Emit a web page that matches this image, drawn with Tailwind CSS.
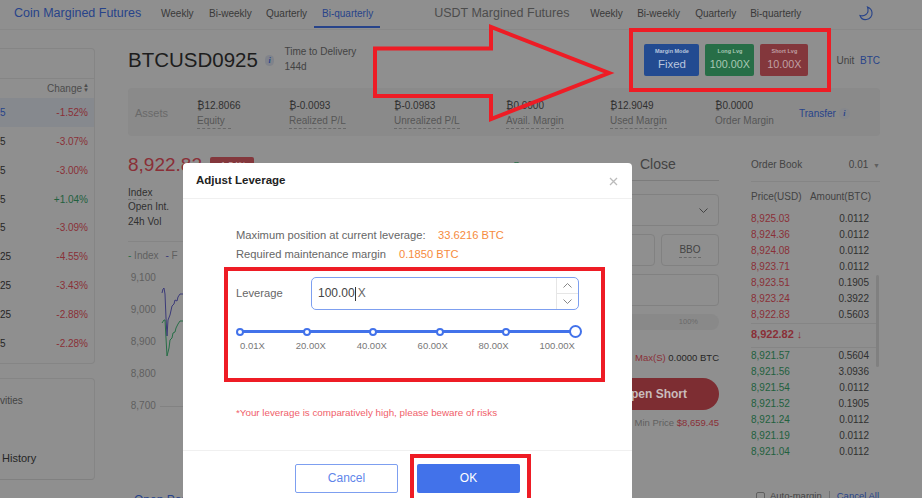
<!DOCTYPE html>
<html lang="en">
<head>
    <meta charset="UTF-8">
    <title>Adjust Leverage</title>
    <script src="https://cdn.jsdelivr.net/npm/@tailwindcss/browser@4"></script>
</head>
<body class="relative w-[922px] h-[498px] overflow-hidden bg-[#8f8f8f] font-['Liberation_Sans',sans-serif] text-[#262626]">

    <!-- page behind the dialog, colours already dimmed -->
    <header class="h-[30px] flex items-center pb-[3px] border-b border-[#888888] text-[10px] text-[#393939]">
        <span class="ml-[14px] w-[147px] text-[12.5px] text-[#27438a]">Coin Margined Futures</span>
        <span class="w-[48px]">Weekly</span>
        <span class="w-[57px]">Bi-weekly</span>
        <span class="w-[56px]">Quarterly</span>
        <span class="relative text-[#27438a]">Bi-quarterly<i class="absolute left-[-8px] right-[-7px] top-[20px] h-[2px] bg-[#27438a]"></i></span>
        <span class="ml-[61px] w-[156px] text-[12.5px] text-[#4c4c4c]">USDT Margined Futures</span>
        <span class="w-[47px]">Weekly</span>
        <span class="w-[58px]">Bi-weekly</span>
        <span class="w-[55px]">Quarterly</span>
        <span>Bi-quarterly</span>
        <svg class="ml-[58px]" width="14" height="15" viewBox="0 0 14 15" fill="none" stroke="#27438a" stroke-width="1.1"><path d="M8.500 1C9.500 4 9 7 7 8.500 5 10 2.500 10 1 9.500 2 12.500 4.500 14 7.500 13.500 11 13 13.500 10 13 6.500 12.800 4 11 2 8.500 1z"/></svg>
    </header>

    <div class="flex">
        <!-- market list -->
        <aside class="w-[95px] mt-[18px] shrink-0 text-[10px]">
            <div class="h-[316px] border border-l-0 border-[#858585] rounded-r">
                <div class="h-[29px]"></div>
                <div class="h-[19px] border-t border-[#858585] flex items-center justify-end pr-[6px] text-[#4c4c4c]">Change<span class="ml-[1px] text-[6px] leading-[5px] w-[5px]">▲<br>▼</span></div>
                <div class="h-[29px] bg-[#86898e] flex items-center justify-between px-[6px] mt-[1px]"><span class="ml-[-6px] text-[#27438a]">5</span><span class="text-[#8a2f37]">-1.52%</span></div>
                <div class="h-[29px] flex items-center justify-between pr-[6px]"><span>5</span><span class="text-[#8a2f37]">-3.07%</span></div>
                <div class="h-[29px] flex items-center justify-between pr-[6px]"><span>5</span><span class="text-[#8a2f37]">-3.00%</span></div>
                <div class="h-[28px] flex items-center justify-between pr-[6px]"><span>5</span><span class="text-[#22613e]">+1.04%</span></div>
                <div class="h-[29px] flex items-center justify-between pr-[6px]"><span>5</span><span class="text-[#8a2f37]">-3.09%</span></div>
                <div class="h-[29px] flex items-center justify-between pr-[6px]"><span>25</span><span class="text-[#8a2f37]">-4.55%</span></div>
                <div class="h-[29px] flex items-center justify-between pr-[6px]"><span>25</span><span class="text-[#8a2f37]">-3.43%</span></div>
                <div class="h-[29px] flex items-center justify-between pr-[6px]"><span>25</span><span class="text-[#8a2f37]">-2.88%</span></div>
                <div class="h-[28px] flex items-center justify-between pr-[6px]"><span>5</span><span class="text-[#8a2f37]">-2.28%</span></div>
            </div>
            <div class="mt-[14px] h-[102px] border border-l-0 border-[#858585] rounded-r border-b-[#808080]">
                <div class="mt-[15px] text-[10px] text-[#434343] leading-[13px]">vities</div>
                <div class="mt-[43px] text-[11px] ml-[2px]">History</div>
            </div>
        </aside>

        <main class="ml-[33px] w-[752px]">
            <!-- title row -->
            <div class="h-[58px] flex items-start pt-[16px]">
                <h1 class="text-[20.5px] leading-[28px] text-[#1d1d1d]">BTCUSD0925</h1>
                <span class="ml-[7px] mt-[9px] w-[11px] h-[11px] rounded-full bg-[#80838b] text-[8px] leading-[11px] text-center italic font-bold text-[#27438a] font-['Liberation_Serif',serif]">i</span>
                <div class="ml-[10px] w-[70px] mt-[-2px] text-[10px] leading-[15px] text-[#434343] whitespace-nowrap">Time to Delivery<br>144d</div>
                <div class="ml-[290px] mt-[-2px] flex gap-[6px] text-center">
                    <div class="w-[55px] h-[32px] rounded-[2px] bg-[#234b91] text-[#b9c6dd]"><div class="text-[5.500px] leading-[7px] mt-[4px] font-bold">Margin Mode</div><div class="text-[11.500px] leading-[14px] mt-[2px]">Fixed</div></div>
                    <div class="w-[49px] h-[32px] rounded-[2px] bg-[#276e47] text-[#a8c8b4]"><div class="text-[5.500px] leading-[7px] mt-[4px] font-bold">Long Lvg</div><div class="text-[10.800px] leading-[14px] mt-[2px]">100.00X</div></div>
                    <div class="w-[48px] h-[32px] rounded-[2px] bg-[#83373c] text-[#c0a0a4]"><div class="text-[5.500px] leading-[7px] mt-[4px] font-bold">Short Lvg</div><div class="text-[10.800px] leading-[14px] mt-[2px]">10.00X</div></div>
                </div>
                <div class="ml-[28px] mt-[7px] text-[10px] text-[#434343] whitespace-nowrap">Unit <span class="ml-[3px] text-[#27438a]">BTC</span></div>
            </div>

            <!-- assets bar -->
            <div class="h-[48px] w-[752px] pt-[2px] rounded bg-[#8a8a8a] flex items-center text-[10px] text-[#303030]">
                <span class="ml-[7px] w-[62px] text-[11px] text-[#696969]">Assets</span>
                <div class="w-[92px] leading-[15px]"><div>₿12.8066</div><div class="w-fit text-[#565656] border-b border-dashed border-[#696969] pr-[6px]">Equity</div></div>
                <div class="w-[105px] leading-[15px]"><div>₿-0.0093</div><div class="w-fit text-[#565656] border-b border-dashed border-[#696969]">Realized P/L</div></div>
                <div class="w-[112px] leading-[15px]"><div>₿-0.0983</div><div class="w-fit text-[#565656] border-b border-dashed border-[#696969]">Unrealized P/L</div></div>
                <div class="w-[104px] leading-[15px]"><div>₿0.0000</div><div class="w-fit text-[#565656] border-b border-dashed border-[#696969]">Avail. Margin</div></div>
                <div class="w-[105px] leading-[15px]"><div>₿12.9049</div><div class="w-fit text-[#565656] border-b border-dashed border-[#696969]">Used Margin</div></div>
                <div class="w-[84px] leading-[15px]"><div>₿0.0000</div><div class="text-[#565656]">Order Margin</div></div>
                <span class="text-[#27438a]">Transfer</span>
                <span class="ml-[3px] w-[11px] h-[11px] rounded-full bg-[#85878c] text-[8px] leading-[11px] text-center italic font-bold text-[#27438a] font-['Liberation_Serif',serif]">i</span>
            </div>

            <div class="flex">
                <!-- price and chart -->
                <section class="w-[372px] h-[362px] text-[10px]">
                    <div class="mt-[16px] flex items-center">
                        <span class="text-[19px] leading-[26px] text-[#8a2f37]">8,922.82</span>
                        <span class="ml-[8px] w-[44px] h-[16px] rounded-[2px] bg-[#83373c] text-[#c0a0a4] text-[9px] leading-[16px] text-center">-1.54%</span>
                    </div>
                    <div class="mt-[8px] leading-[14.500px] text-[#303030]">
                        <div class="w-fit border-b border-dashed border-[#727272] leading-[13px]">Index</div>
                        <div>Open Int.</div>
                        <div>24h Vol</div>
                    </div>
                    <div class="mt-[12px] border-t border-[#858585] pt-[8px] leading-[12px] text-[#5f5f5f]"><span class="text-[#276e47]">-</span> Index <span class="ml-[4px] text-[#3b3a79]">-</span> F</div>
                    <div class="relative text-[#5f5f5f] leading-[32px]">
                        <div>&nbsp;9,100</div><div>&nbsp;9,000</div><div>&nbsp;8,900</div><div>&nbsp;8,800</div>
                        <div class="flex items-center">&nbsp;8,700<i class="ml-[4px] flex-1 h-px bg-[#828282]"></i></div>
                        <svg class="absolute left-[32px] top-[6px]" width="30" height="90" viewBox="0 0 30 90" fill="none" stroke-width="1">
                            <path d="M2 25L3 21L4 20L5 26L6 50L7 68L8 52L10 47L12 38L14 36L15 32L17 33L18 29L20 26L24 26" stroke="#3b3a79"/>
                            <path d="M2 55L4 52L5 52L6 70L7 88L9 80L10 72L12 70L13 65L15 64L16 60L18 56L20 53L24 53L28 54" stroke="#276e47"/>
                        </svg>
                    </div>
                    <div class="mt-[70px] ml-[6px] text-[12px] leading-[16px] text-[#27438a]">Open Positions</div>
                </section>

                <!-- order form -->
                <section class="ml-[10px] w-[209px] text-[10px]">
                    <div class="h-[45px] border-b border-[#7c7c7c] flex items-center pt-[13px] text-[14px] text-[#434343]">
                        <span class="ml-[1px] mt-[5px] w-[11px] h-[11px] rounded-full border border-[#276e47]"></span>
                        <span class="ml-[118px]">Close</span>
                    </div>
                    <div class="mt-[13px] h-[32px] border border-[#818181] rounded flex items-center justify-end pr-[10px]"><svg width="9" height="5" viewBox="0 0 9 5" fill="none" stroke="#434343"><path d="M.5.5l4 4 4-4"/></svg></div>
                    <div class="mt-[8px] flex gap-[6px]">
                        <div class="flex-1 h-[32px] border border-[#818181] rounded"></div>
                        <div class="w-[58px] h-[32px] border border-[#818181] rounded flex items-center justify-center text-[#434343]"><span class="border-b border-dashed border-[#696969]">BBO</span></div>
                    </div>
                    <div class="mt-[8px] h-[32px] border border-[#818181] rounded"></div>
                    <div class="mt-[8px] h-[16px] rounded-full bg-[#898989] text-right pr-[21px] text-[7.500px] leading-[16px] text-[#696969]">100%</div>
                    <div class="mt-[22px] text-right text-[9.500px] leading-[12px]"><span class="text-[#8a2f37]">Max(S)</span> 0.0000 BTC</div>
                    <div class="mt-[14px] h-[32px] rounded-r-full bg-[#7d2d32] text-[#c9bcbc] text-[12px] font-bold leading-[32px] text-right pr-[32px]">Open Short</div>
                    <div class="mt-[7px] text-right text-[9.500px] leading-[12px] text-[#5f5f5f]">Min Price <span class="text-[#8a2f37]">$8,659.45</span></div>
                </section>

                <!-- order book -->
                <section class="relative ml-[32px] w-[129px] text-[10px]">
                    <div class="h-[46px] pt-[11px] flex items-center justify-between text-[#434343]"><span>Order Book</span><span>0.01 <span class="ml-[2px] text-[7px] text-[#5f5f5f]">▼</span></span></div>
                    <div class="border-t border-[#858585] h-0 mt-[-1px]"></div>
                    <div class="mt-[9px] flex justify-between leading-[12px] pr-[9px] text-[#434343] mb-[8px]"><span>Price(USD)</span><span>Amount(BTC)</span></div>
                    <div class="leading-[16px] text-[#8a2f37]">
                        <div class="flex justify-between pr-[11px]">8,925.03<span class="text-[#303030]">0.0112</span></div>
                        <div class="flex justify-between pr-[11px]">8,924.36<span class="text-[#303030]">0.0112</span></div>
                        <div class="flex justify-between pr-[11px]">8,924.08<span class="text-[#303030]">0.0112</span></div>
                        <div class="flex justify-between pr-[11px]">8,923.71<span class="text-[#303030]">0.0112</span></div>
                        <div class="flex justify-between pr-[11px]">8,923.51<span class="text-[#303030]">0.1905</span></div>
                        <div class="flex justify-between pr-[11px]">8,923.24<span class="text-[#303030]">0.3922</span></div>
                        <div class="flex justify-between pr-[11px]">8,922.83<span class="text-[#303030]">0.5603</span></div>
                    </div>
                    <div class="h-[25px] border-y border-[#858585] text-[11px] font-bold leading-[20px] text-[#8a2f37] w-[125px]">8,922.82 ↓</div>
                    <div class="leading-[16px] text-[#22613e]">
                        <div class="flex justify-between pr-[11px]">8,921.57<span class="text-[#303030]">0.5604</span></div>
                        <div class="flex justify-between pr-[11px]">8,921.56<span class="text-[#303030]">3.0936</span></div>
                        <div class="flex justify-between pr-[11px]">8,921.54<span class="text-[#303030]">0.0112</span></div>
                        <div class="flex justify-between pr-[11px]">8,921.52<span class="text-[#303030]">0.1905</span></div>
                        <div class="flex justify-between pr-[11px]">8,921.24<span class="text-[#303030]">0.0112</span></div>
                        <div class="flex justify-between pr-[11px]">8,921.19<span class="text-[#303030]">0.0112</span></div>
                        <div class="flex justify-between pr-[11px]">8,921.04<span class="text-[#303030]">0.0112</span></div>
                    </div>
                    <div class="mt-[30px] flex items-center whitespace-nowrap text-[9.500px] leading-[12px] text-[#434343]">
                        <i class="w-[9px] h-[9px] border border-[#5f5f5f] rounded-[2px] ml-[5px] mr-[5px]"></i>Auto-margin
                        <i class="w-px h-[10px] bg-[#727272] mx-[7px]"></i><span class="text-[#27438a]">Cancel All</span>
                    </div>
                    <i class="absolute left-[125px] top-[139px] w-[3px] h-[92px] rounded bg-[#808080]"></i>
                </section>
            </div>
        </main>
    </div>

    <!-- adjust leverage dialog -->
    <div class="absolute left-[183px] top-[163px] w-[449px] h-[335px] overflow-hidden bg-white rounded-t text-[#666]">
        <div class="h-[36px] pt-[1px] border-b border-[#f0f0f0] flex items-center justify-between pl-[13px] pr-[14px]">
            <span class="text-[11.500px] font-bold text-[#222]">Adjust Leverage</span>
            <svg width="9" height="9" viewBox="0 0 9 9" stroke="#bbb" stroke-width="1.300"><path d="M1 1l7 7M8 1l-7 7"/></svg>
        </div>
        <div class="pl-[53px] pt-[27px] text-[11.200px] leading-[19px]">
            <div class="flex"><span class="w-[202px]">Maximum position at current leverage:</span><span class="text-[#f68b3d]">33.6216 BTC</span></div>
            <div class="flex"><span class="w-[163px]">Required maintenance margin</span><span class="text-[#f68b3d]">0.1850 BTC</span></div>
            <div class="flex mt-[13px] items-center">
                <span class="w-[75px]">Leverage</span>
                <div class="w-[268px] h-[33px] border border-[#7d9ff0] rounded-[5px] flex items-center pl-[6px] text-[12px] text-[#444]">
                    <span>100.00</span><i class="w-px h-[14px] bg-[#333]"></i><span class="ml-[2px] flex-1 text-[#666]">X</span>
                    <div class="w-[22px] h-full border-l border-[#e6e6e6] flex flex-col">
                        <div class="flex-1 border-b border-[#e6e6e6] flex items-center justify-center"><svg width="9" height="5" viewBox="0 0 9 5" fill="none" stroke="#888"><path d="M.5 4.500l4-4 4 4"/></svg></div>
                        <div class="flex-1 flex items-center justify-center"><svg width="9" height="5" viewBox="0 0 9 5" fill="none" stroke="#888"><path d="M.5.500l4 4 4-4"/></svg></div>
                    </div>
                </div>
            </div>
            <div class="relative mt-[14px] w-[346px] h-[15px] flex items-center justify-between">
                <i class="absolute left-[4px] right-[8px] top-[6px] h-[3px] bg-[#4272ea]"></i>
                <i class="relative w-[8px] h-[8px] rounded-full bg-white border-2 border-[#4272ea]"></i>
                <i class="relative w-[8px] h-[8px] rounded-full bg-white border-2 border-[#4272ea]"></i>
                <i class="relative w-[8px] h-[8px] rounded-full bg-white border-2 border-[#4272ea]"></i>
                <i class="relative w-[8px] h-[8px] rounded-full bg-white border-2 border-[#4272ea]"></i>
                <i class="relative w-[8px] h-[8px] rounded-full bg-white border-2 border-[#4272ea]"></i>
                <i class="relative w-[13px] h-[13px] rounded-full bg-white border-2 border-[#4272ea]"></i>
            </div>
            <div class="mt-[1px] ml-[4px] w-[335px] flex justify-between text-[9.500px] leading-[12px] text-[#777]">
                <span>0.01X</span><span>20.00X</span><span>40.00X</span><span>60.00X</span><span>80.00X</span><span>100.00X</span>
            </div>
            <div class="mt-[55px] text-[9.800px] leading-[12px] text-[#f0606a]">*Your leverage is comparatively high, please beware of risks</div>
        </div>
        <div class="mt-[31px] border-t border-[#f0f0f0] pt-[13px] flex gap-[19px] pl-[112px] text-[12px] text-center">
            <div class="w-[103px] h-[29px] leading-[27px] border border-[#7d9ff0] rounded-[2px] text-[#5f86ea]">Cancel</div>
            <div class="w-[103px] h-[29px] leading-[29px] rounded-[2px] bg-[#4272ea] text-white">OK</div>
        </div>
    </div>

    <!-- red annotations drawn over the screenshot -->
    <svg class="absolute inset-0" width="922" height="498" viewBox="0 0 922 498" fill="none" stroke="#ee1c25" stroke-width="4">
        <path d="M375 48.500H491V27L609 73 491 119V96H375z"/>
        <rect x="631" y="30" width="198" height="60"/>
        <rect x="226" y="269" width="377" height="111"/>
        <rect x="412" y="456" width="117" height="46"/>
    </svg>
</body>
</html>
